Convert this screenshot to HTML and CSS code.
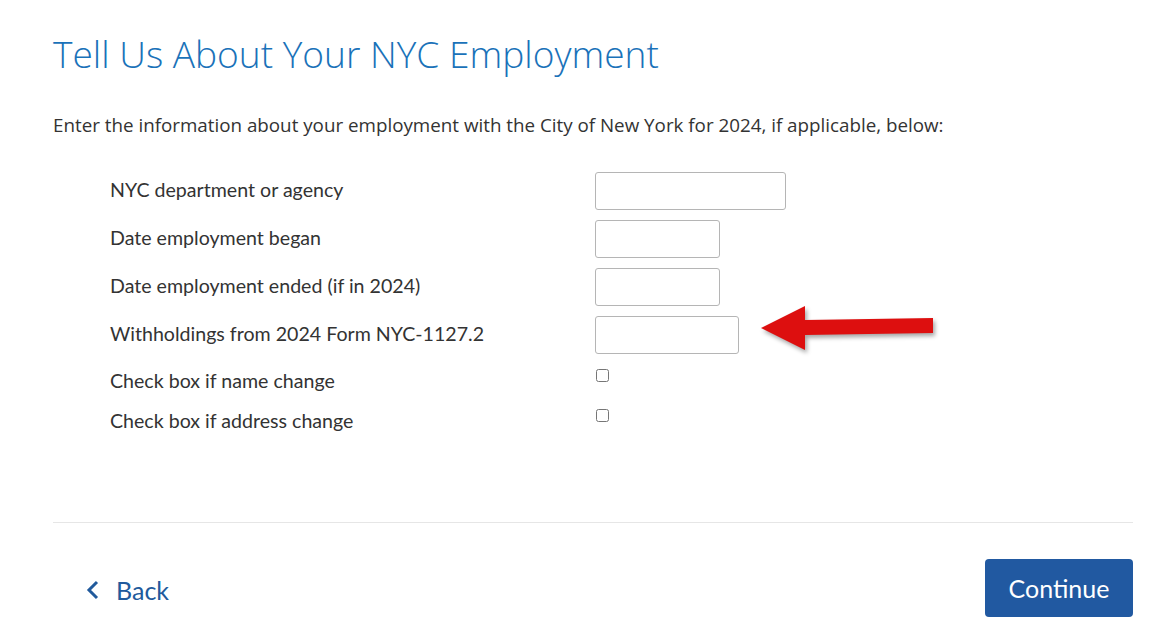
FILE: index.html
```html
<!DOCTYPE html>
<html lang="en">
<head>
    <meta charset="UTF-8">
    <title>Tell Us About Your NYC Employment</title>
    <link rel="stylesheet" href="styles.css">
</head>
<body>
    <div class="page">
        <h1>Tell Us About Your NYC Employment</h1>
        <p class="intro">Enter the information about your employment with the City of New York for 2024, if applicable, below:</p>

        <div class="form">
            <div class="row">
                <label for="agency">NYC department or agency</label>
                <input id="agency" class="field wide" type="text">
            </div>
            <div class="row">
                <label for="began">Date employment began</label>
                <input id="began" class="field short" type="text">
            </div>
            <div class="row">
                <label for="ended">Date employment ended (if in 2024)</label>
                <input id="ended" class="field short" type="text">
            </div>
            <div class="row">
                <label for="withheld">Withholdings from 2024 Form NYC-1127.2</label>
                <div class="field-wrap">
                    <input id="withheld" class="field medium" type="text">
                    <svg class="arrow" width="180" height="56" viewBox="0 0 180 56">
                        <polygon points="4,28 48,6 48,20 176,18 176,33 48,35 48,50" fill="#dd0f0f"/>
                    </svg>
                </div>
            </div>
            <div class="row check-row">
                <label for="name-change">Check box if name change</label>
                <input id="name-change" class="check" type="checkbox">
            </div>
            <div class="row check-row">
                <label for="addr-change">Check box if address change</label>
                <input id="addr-change" class="check" type="checkbox">
            </div>
        </div>

        <hr class="divider">

        <div class="actions">
            <a class="back" href="#">
                <svg width="14" height="20" viewBox="0 0 14 20"><polyline points="11,2 3,10 11,18" fill="none" stroke="#215a9c" stroke-width="3"/></svg>
                Back
            </a>
            <button class="continue">Continue</button>
        </div>
    </div>
</body>
</html>
```

FILE: styles.css
```css
/* Page */
body {
    margin: 0;
    background: #fff;
    color: #333;
    font-family: Lato, "Noto Sans", sans-serif;
}
.page {
    padding: 30px 31px 0 53px;
}
h1 {
    margin: 0;
    font-family: "Open Sans", sans-serif;
    font-weight: 300;
    font-size: 37.1px;
    line-height: 48px;
    color: #1a72b9;
}
.intro {
    margin: 35px 0 0;
    font-family: "Open Sans", sans-serif;
    font-size: 18.8px;
    line-height: 24px;
    color: #333;
}

/* Form rows */
.form {
    margin-top: 30px;
    padding-left: 57px;
}
.row {
    display: flex;
    align-items: center;
    height: 48px;
}
.row label {
    width: 485px;
    margin-top: -3px;
    font-size: 19.6px;
    color: #333;
}
.check-row {
    height: 40px;
}
.check-row label {
    margin-top: 3px;
}
.field {
    box-sizing: border-box;
    height: 38px;
    margin: 0;
    border: 1px solid #b5b5b5;
    border-radius: 3px;
    background: #fff;
}
.wide { width: 191px; }
.short { width: 125px; }
.medium { width: 144px; }
.field-wrap {
    position: relative;
    display: flex;
    align-items: center;
}
.arrow {
    position: absolute;
    left: 162px;
    top: -16px;
    filter: drop-shadow(2px 3px 2px rgba(0, 0, 0, 0.35));
}
.check {
    width: 13px;
    height: 13px;
    margin: -8px 0 0 1px;
}

/* Footer actions */
.divider {
    margin: 83px 0 0;
    border: none;
    border-top: 1px solid #e6e6e6;
}
.actions {
    display: flex;
    justify-content: space-between;
    align-items: center;
    padding: 36px 0 0 33px;
}
.back {
    display: flex;
    align-items: center;
    gap: 16px;
    margin-top: 3px;
    font-size: 25px;
    color: #215a9c;
    text-decoration: none;
}
.continue {
    width: 148px;
    height: 58px;
    border: none;
    border-radius: 4px;
    background: #2159a1;
    color: #fff;
    font-family: Lato, "Noto Sans", sans-serif;
    font-size: 25px;
}
```
